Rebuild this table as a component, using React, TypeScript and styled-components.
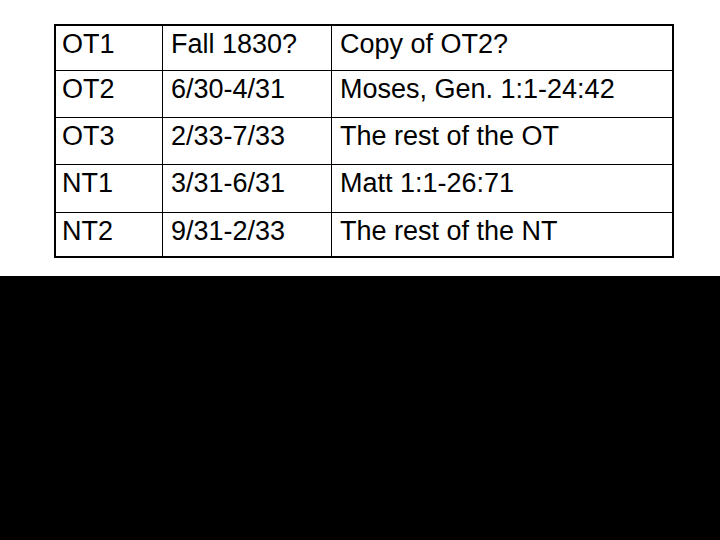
import React from 'react';
import styled, { createGlobalStyle } from 'styled-components';

const Global = createGlobalStyle`
  html, body {
    margin: 0;
    padding: 0;
    background: #fff;
  }
`;

const Page = styled.div`
  width: 720px;
  height: 540px;
  display: flex;
  flex-direction: column;
  font-family: "Liberation Sans", Arial, sans-serif;
  color: #000;
`;

const Sheet = styled.div`
  height: 276px;
  padding: 24px 0 0 54px;
  box-sizing: border-box;
  background: #fff;
`;

const Blackout = styled.div`
  flex: 1;
  background: #000;
`;

const Table = styled.table`
  width: 620px;
  table-layout: fixed;
  border-collapse: separate;
  border-spacing: 0;
  border: 2px solid #000;
`;

const Row = styled.tr<{ $h: number }>`
  height: ${(p) => p.$h}px;

  &:last-child td {
    border-bottom: none;
  }
`;

const Cell = styled.td<{ $width: number }>`
  width: ${(p) => p.$width}px;
  box-sizing: border-box;
  padding: 3px 8px 0 ${(p) => (p.$width === 107 ? 6 : 8)}px;
  vertical-align: top;
  font-size: 27px;
  line-height: 31px;
  white-space: nowrap;
  border-right: 1px solid #000;
  border-bottom: 1px solid #000;

  &:last-child {
    border-right: none;
  }
`;

const rows = [
  ['OT1', 'Fall 1830?', 'Copy of OT2?'],
  ['OT2', '6/30-4/31', 'Moses, Gen. 1:1-24:42'],
  ['OT3', '2/33-7/33', 'The rest of the OT'],
  ['NT1', '3/31-6/31', 'Matt 1:1-26:71'],
  ['NT2', '9/31-2/33', 'The rest of the NT'],
];

const heights = [45, 47, 47, 48, 43];
const widths = [107, 169, 340];

const App: React.FC = () => {
  return <>
    <Global />
    <Page>
      <Sheet>
        <Table>
          <tbody>
            {rows.map((r, ri) => (
              <Row key={r[0]} $h={heights[ri]}>
                {r.map((t, i) => (
                  <Cell key={i} $width={widths[i]}>{t}</Cell>
                ))}
              </Row>
            ))}
          </tbody>
        </Table>
      </Sheet>
      <Blackout />
    </Page>
  </>
}

export default App;
